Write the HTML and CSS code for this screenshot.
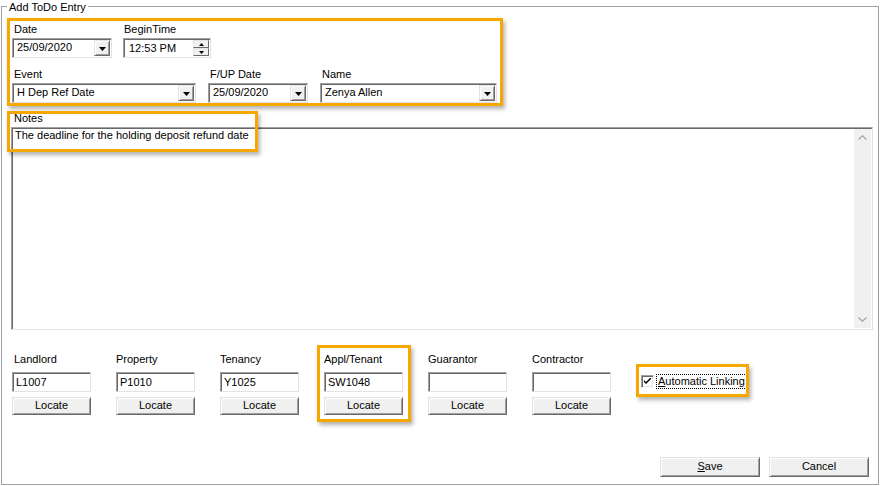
FILE: index.html
```html
<!DOCTYPE html>
<html>
<head>
<meta charset="utf-8">
<link rel="stylesheet" href="styles.css">
</head>
<body>
<div class="group">
  <span class="legend">Add ToDo Entry</span>

  <div class="top">
    <div class="row row1">
      <div class="field">
        <div class="lbl">Date</div>
        <div class="combo w-date">
          <span class="val">25/09/2020</span>
          <span class="ddbtn"><svg width="7" height="4" viewBox="0 0 7 4"><polygon points="0,0 7,0 3.5,4" fill="#000"/></svg></span>
        </div>
      </div>
      <div class="field">
        <div class="lbl lbl-time">BeginTime</div>
        <div class="combo w-time">
          <span class="val val-time">12:53 PM</span>
          <span class="spin">
            <span class="spinbtn"><svg width="5" height="3" viewBox="0 0 5 3"><polygon points="2.5,0 5,3 0,3" fill="#000"/></svg></span>
            <span class="spinbtn"><svg width="5" height="3" viewBox="0 0 5 3"><polygon points="0,0 5,0 2.5,3" fill="#000"/></svg></span>
          </span>
        </div>
      </div>
    </div>
    <div class="row row2">
      <div class="field">
        <div class="lbl">Event</div>
        <div class="combo w-event">
          <span class="val">H Dep Ref Date</span>
          <span class="ddbtn"><svg width="7" height="4" viewBox="0 0 7 4"><polygon points="0,0 7,0 3.5,4" fill="#000"/></svg></span>
        </div>
      </div>
      <div class="field">
        <div class="lbl">F/UP Date</div>
        <div class="combo w-fup">
          <span class="val">25/09/2020</span>
          <span class="ddbtn"><svg width="7" height="4" viewBox="0 0 7 4"><polygon points="0,0 7,0 3.5,4" fill="#000"/></svg></span>
        </div>
      </div>
      <div class="field">
        <div class="lbl">Name</div>
        <div class="combo w-name">
          <span class="val">Zenya Allen</span>
          <span class="ddbtn"><svg width="7" height="4" viewBox="0 0 7 4"><polygon points="0,0 7,0 3.5,4" fill="#000"/></svg></span>
        </div>
      </div>
    </div>
  </div>

  <div class="notes">
    <div class="notes-label">Notes</div>
    <div class="textarea">
      <div class="ta-text">The deadline for the holding deposit refund date</div>
      <div class="vscroll">
        <svg width="9" height="5" viewBox="0 0 9 5"><polyline points="0.5,4.5 4.5,0.8 8.5,4.5" fill="none" stroke="#a6a6a6" stroke-width="1.3"/></svg>
        <svg width="9" height="5" viewBox="0 0 9 5"><polyline points="0.5,0.5 4.5,4.2 8.5,0.5" fill="none" stroke="#a6a6a6" stroke-width="1.3"/></svg>
      </div>
    </div>
    <div class="notes-hl"></div>
  </div>

  <div class="links">
    <div class="col first">
      <div class="lbl">Landlord</div>
      <div class="input">L1007</div>
      <div class="btn locate">Locate</div>
    </div>
    <div class="col">
      <div class="lbl">Property</div>
      <div class="input">P1010</div>
      <div class="btn locate">Locate</div>
    </div>
    <div class="col">
      <div class="lbl">Tenancy</div>
      <div class="input">Y1025</div>
      <div class="btn locate">Locate</div>
    </div>
    <div class="col hl-col">
      <div class="lbl">Appl/Tenant</div>
      <div class="input">SW1048</div>
      <div class="btn locate">Locate</div>
    </div>
    <div class="col">
      <div class="lbl">Guarantor</div>
      <div class="input"></div>
      <div class="btn locate">Locate</div>
    </div>
    <div class="col">
      <div class="lbl">Contractor</div>
      <div class="input"></div>
      <div class="btn locate">Locate</div>
    </div>
    <div class="chk">
      <span class="box"><svg width="7" height="7" viewBox="0 0 7 7"><path d="M0 2 L0 4 L2 6 L7 1 L7 -1 L2 4 Z" fill="#000"/></svg></span>
      <span class="chk-label"><u>A</u>utomatic Linking</span>
    </div>
  </div>

  <div class="actions">
    <div class="btn action"><u>S</u>ave</div>
    <div class="btn action">Cancel</div>
  </div>
</div>
</body>
</html>
```

FILE: styles.css
```css
* { box-sizing: border-box; }
html, body { margin: 0; padding: 0; background: #fff; }
body {
  font: 11px/13px "Liberation Sans", Arial, sans-serif;
  color: #000;
  width: 880px;
  height: 486px;
  overflow: hidden;
}

.group {
  position: relative;
  margin: 6px 0 0 1px;
  width: 878px;
  height: 479px;
  border: 1px solid #a0a0a0;
  display: flex;
  flex-direction: column;
}
.legend {
  position: absolute;
  top: -6px;
  left: 5px;
  padding: 0 2px;
  background: #fff;
  line-height: 13px;
}

/* top highlighted block */
.top {
  margin: 11px 0 0 5px;
  width: 496px;
  border: 3px solid #f6a800;
  box-shadow: 2px 3px 4px rgba(0, 0, 0, 0.3);
  padding: 2px 0 0 2px;
}
.row { display: flex; }
.row1 { gap: 11px; }
.row2 { gap: 12px; margin-top: 10px; }
.lbl { height: 13px; padding-left: 2px; white-space: nowrap; }
.lbl-time { padding-left: 1px; }

.combo {
  margin-top: 2px;
  height: 20px;
  border: 1px solid;
  border-color: #a0a0a0 #e3e3e3 #e3e3e3 #a0a0a0;
  box-shadow: inset 1px 1px 0 #696969;
  background: #fff;
  padding: 1px;
  display: flex;
}
.w-date { width: 100px; }
.w-time { width: 88px; }
.w-event { width: 184px; }
.w-fup { width: 100px; }
.w-name { width: 177px; }
.val { flex: 1; padding-left: 3px; line-height: 15px; white-space: nowrap; overflow: hidden; }
.val-time { padding-left: 4px; line-height: 17px; }

.ddbtn {
  width: 16px;
  height: 16px;
  border: 1px solid;
  border-color: #e3e3e3 #696969 #696969 #e3e3e3;
  box-shadow: inset 1px 1px 0 #fff, inset -1px -1px 0 #a0a0a0;
  background: #f0f0f0;
  display: flex;
  align-items: center;
  justify-content: center;
}
.ddbtn svg { display: block; margin-top: 1px; }

.spin { width: 16px; display: flex; flex-direction: column; }
.spinbtn {
  height: 8px;
  border: 1px solid;
  border-color: #e3e3e3 #696969 #696969 #e3e3e3;
  background: #f0f0f0;
  display: flex;
  align-items: center;
  justify-content: center;
}
.spinbtn svg { display: block; }

/* notes */
.notes { position: relative; margin-top: 6px; }
.notes-label { padding-left: 12px; height: 13px; }
.textarea {
  margin: 2px 0 0 9px;
  width: 862px;
  height: 203px;
  border: 1px solid;
  border-color: #a0a0a0 #e3e3e3 #e3e3e3 #a0a0a0;
  box-shadow: inset 1px 1px 0 #696969;
  padding: 1px;
  display: flex;
  background: #fff;
}
.ta-text { flex: 1; padding: 0 2px; line-height: 13px; }
.vscroll {
  width: 17px;
  background: #f0f0f0;
  display: flex;
  flex-direction: column;
  justify-content: space-between;
  align-items: center;
  padding: 6px 0 6px;
}
.vscroll svg { display: block; }
.notes-hl {
  position: absolute;
  left: 5px;
  top: -1px;
  width: 251px;
  height: 41px;
  border: 3px solid #f6a800;
  box-shadow: 2px 3px 4px rgba(0, 0, 0, 0.3);
  pointer-events: none;
}

/* link columns */
.links {
  display: flex;
  gap: 25px;
  margin-top: 23px;
  padding-left: 10px;
  align-items: flex-start;
}
.col { width: 79px; display: flex; flex-direction: column; }
.col .lbl { padding-left: 0; }
.col.first .lbl { padding-left: 2px; }
.col.hl-col { position: relative; }
.col.hl-col::after {
  content: "";
  position: absolute;
  top: -8px;
  left: -7px;
  right: -8px;
  bottom: -7px;
  border: 3px solid #f6a800;
  box-shadow: 2px 3px 4px rgba(0, 0, 0, 0.3);
  pointer-events: none;
}
.input {
  margin-top: 6px;
  height: 20px;
  border: 1px solid;
  border-color: #a0a0a0 #e3e3e3 #e3e3e3 #a0a0a0;
  box-shadow: inset 1px 1px 0 #696969;
  padding: 1px 3px 0;
  line-height: 16px;
  background: #fff;
}

.btn {
  border: 1px solid;
  border-color: #e3e3e3 #696969 #696969 #e3e3e3;
  box-shadow: inset 1px 1px 0 #fff, inset -1px -1px 0 #a0a0a0;
  background: #f0f0f0;
  text-align: center;
}
.locate { margin-top: 5px; height: 18px; line-height: 15px; }

.chk {
  position: relative;
  margin: 22px 0 0 5px;
  width: 108px;
  height: 13px;
  display: flex;
  align-items: center;
  gap: 3px;
}
.chk::after {
  content: "";
  position: absolute;
  top: -11px;
  left: -5px;
  right: 0;
  bottom: -9px;
  border: 3px solid #f6a800;
  box-shadow: 2px 3px 4px rgba(0, 0, 0, 0.3);
  pointer-events: none;
}
.box {
  width: 13px;
  height: 13px;
  border: 1px solid;
  border-color: #a0a0a0 #fff #fff #a0a0a0;
  box-shadow: inset 1px 1px 0 #696969, inset -1px -1px 0 #e3e3e3;
  background: #fff;
  display: flex;
  align-items: center;
  justify-content: center;
}
.box svg { display: block; }
.chk-label {
  outline: 1px dotted #000;
  padding: 0 1px;
  line-height: 13px;
  white-space: nowrap;
}

/* bottom actions */
.actions {
  margin-top: auto;
  margin-bottom: 7px;
  padding-right: 9px;
  display: flex;
  justify-content: flex-end;
  gap: 9px;
}
.action { width: 100px; height: 20px; line-height: 17px; }
```
